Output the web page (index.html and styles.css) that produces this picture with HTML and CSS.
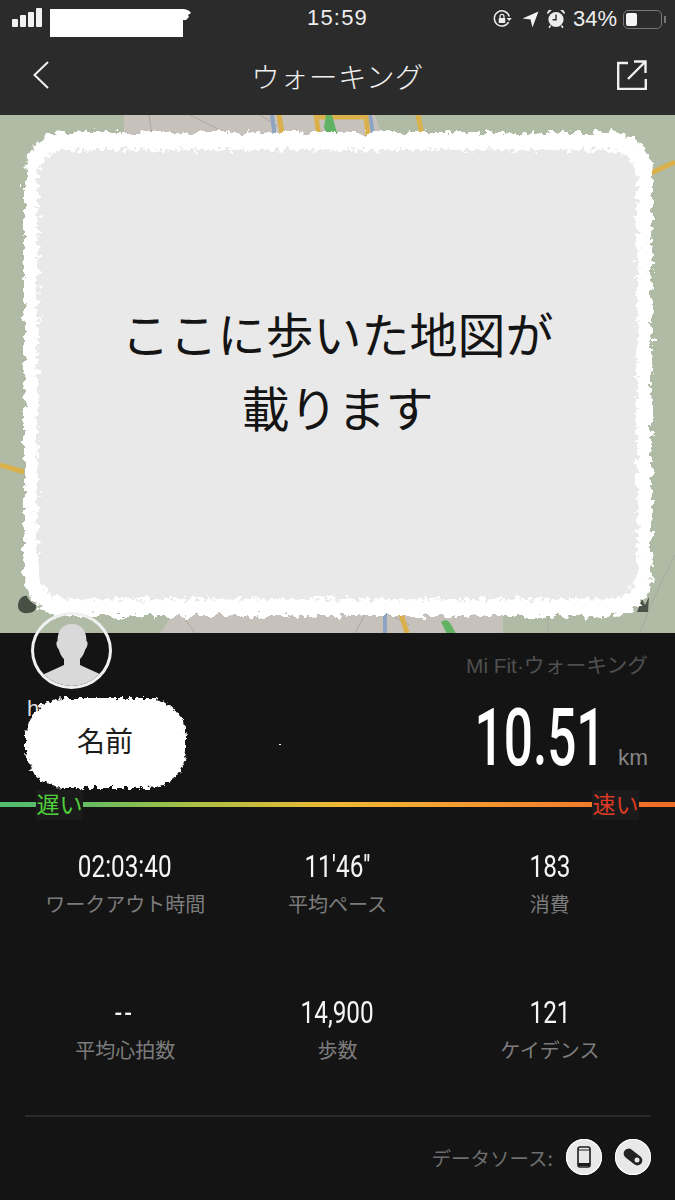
FILE: index.html
```html
<!DOCTYPE html>
<html>
<head>
	<title>ウォーキング</title>
	<meta charset="utf-8">
	<link rel="stylesheet" href="styles.css">
</head>
<body>

<svg class="defs" width="0" height="0">
	<filter id="rough" x="-5%" y="-5%" width="110%" height="110%" color-interpolation-filters="sRGB">
		<feTurbulence type="fractalNoise" baseFrequency=".13" numOctaves="3" seed="4"/>
		<feDisplacementMap in="SourceGraphic" scale="13" xChannelSelector="R" yChannelSelector="G"/>
		<feGaussianBlur stdDeviation=".5"/>
	</filter>
	<filter id="roughinner" x="-5%" y="-5%" width="110%" height="110%" color-interpolation-filters="sRGB">
		<feTurbulence type="fractalNoise" baseFrequency=".2" numOctaves="4" seed="11"/>
		<feDisplacementMap in="SourceGraphic" scale="14" xChannelSelector="R" yChannelSelector="G"/>
		<feGaussianBlur stdDeviation=".7"/>
	</filter>
	<filter id="roughsmall" x="-5%" y="-5%" width="110%" height="110%" color-interpolation-filters="sRGB">
		<feTurbulence type="fractalNoise" baseFrequency=".2" numOctaves="3" seed="9"/>
		<feDisplacementMap in="SourceGraphic" scale="9" xChannelSelector="R" yChannelSelector="G"/>
		<feGaussianBlur stdDeviation=".3"/>
	</filter>
</svg>

<div class="top">
	<div class="status">
		<div class="status-left">
			<div class="signal"><i class="s1"></i><i class="s2"></i><i class="s3"></i><i class="s4"></i></div>
			<div class="redact"></div>
			<svg class="wifi-bit" width="8" height="12" viewBox="0 0 8 12"><path d="M0 0C3 0 6 1 8 4L5 6 6 8 3 11H0z" fill="#fff"/></svg>
		</div>
		<div class="clock">15:59</div>
		<div class="status-right">
			<svg width="19" height="18" viewBox="0 0 19 18">
				<path d="M15.6 12.2A7.6 7.6 0 1 1 16.3 6.5" fill="none" stroke="#eee" stroke-width="1.5"/>
				<path d="M13.6 8h5.2l-2.6 3z" fill="#eee"/>
				<rect x="5.7" y="8" width="6.6" height="5" rx=".8" fill="#eee"/>
				<path d="M7 8V6.4a2 2 0 0 1 4 0V8" fill="none" stroke="#eee" stroke-width="1.2"/>
			</svg>
			<svg class="arrow" width="17" height="17" viewBox="0 0 17 17"><path d="M0.5 7.6 16.5 0.5 10.4 16.5 8.6 8.6z" fill="#f2f2f2"/></svg>
			<svg class="alarm" width="18" height="20" viewBox="0 0 18 20">
				<circle cx="9" cy="10.5" r="7.6" fill="#eee"/>
				<path d="M9 5.5v5.3H5.6" fill="none" stroke="#2b2b2b" stroke-width="1.4"/>
				<path d="M.6 5.2 4.6 1.2A3 3 0 0 0 .6 5.2zM17.4 5.2 13.4 1.2A3 3 0 0 1 17.4 5.2z" fill="#eee"/>
				<path d="M3.6 16.5 2 18.8M14.4 16.5 16 18.8" stroke="#eee" stroke-width="1.5"/>
			</svg>
			<span class="pct">34%</span>
			<div class="battery"><div class="battery-fill"></div></div>
			<div class="battery-nub"></div>
		</div>
	</div>
	<div class="nav">
		<svg width="16" height="28" viewBox="0 0 16 28"><path d="M15 1 1.5 14 15 27" fill="none" stroke="#f0f0f0" stroke-width="2"/></svg>
		<div class="title">ウォーキング</div>
		<svg class="share" width="30" height="30" viewBox="0 0 30 30">
			<path d="M11 3H1.2V29H28.8V19" fill="none" stroke="#f0f0f0" stroke-width="2.4"/>
			<path d="M11 19 28 2M17 1.5H28.5V13" fill="none" stroke="#f0f0f0" stroke-width="2.4"/>
		</svg>
	</div>
</div>

<div class="map">
	<svg class="map-art" width="675" height="518" viewBox="0 0 675 518">
		<rect width="675" height="518" fill="#b0bba6"/>
		<path d="M124 0H375L395 60 520 300 503 470V518H160L200 460 124 300z" fill="#c6c2bb"/>
		<g fill="none" stroke="#a3ae9a" stroke-width="1">
			<path d="M640 518C650 490 660 470 675 440"/>
			<path d="M548 500V518"/>
		</g>
		<g fill="none" stroke="#a9a6a0" stroke-width="1">
			<path d="M149 0 152 20M190 0 230 20M260 0 300 25"/>
			<path d="M355 518 370 490 410 510M175 490 195 518"/>
		</g>
		<g fill="none" stroke="#8ea4c4" stroke-width="4">
			<path d="M272 0 276 30M370 0 374 25M385 485V518"/>
		</g>
		<g fill="none" stroke="#d9b04c" stroke-width="5">
			<path d="M279 0 284 30M316 0 320 30M316 2H366L369 30M418 0 424 30"/>
			<path d="M398 490 407 518"/>
			<path d="M640 63 675 47M0 350 24 357"/>
		</g>
		<path d="M326 0h6l5 18-4 6h-4l-5-12z" fill="#62b263"/>
		<path d="M441 507c4-3 7-2 9 1l11 19h-10z" fill="#62b263"/>
		<path d="M18 491c0-7 5-11 9-10 1 4 5 7 9 9 1 5-3 8-8 8-5 1-10-2-10-7z" fill="#485045"/>
		<path d="M637 497 642 484 645 490 649 482 648 497z" fill="#4b5247"/>
		<rect x="24" y="17" width="628" height="484" rx="40" fill="#fff" filter="url(#rough)"/>
		<rect x="38" y="35" width="599" height="449" rx="28" fill="#e9e9e9" filter="url(#roughinner)"/>
	</svg>
	<div class="map-note">ここに歩いた地図が<br>載ります</div>
</div>

<div class="summary">
	<div class="avatar">
		<svg width="74" height="74" viewBox="0 0 74 74">
			<path d="M37 9c10 0 14.500 7 14.500 17 2 1 1 6-1 8-2 6-3.500 8-5.500 10v6l22 10c-7 8-17 13-30 13S13 68 7 60l22-10v-6c-2-2-3.500-4-5.500-10-2-2-3-7-1-8C22.500 16 27 9 37 9z" fill="#d9d9d9"/>
		</svg>
	</div>
	<div class="who">
		<span class="name-behind">h</span>
		<svg class="name-art" width="185" height="112" viewBox="0 0 185 112">
			<rect x="12" y="10" width="160" height="90" rx="38" fill="#fff" filter="url(#roughsmall)"/>
		</svg>
		<span class="name">名前</span>
	</div>
	<span class="dot"></span>
	<div class="result">
		<div class="source">Mi Fit·ウォーキング</div>
		<div class="distance">
			<span class="distance-num">10.51</span>
			<span class="unit">km</span>
		</div>
	</div>
</div>

<div class="speed">
	<span class="slow">遅い</span>
	<span class="fast">速い</span>
</div>

<div class="stats">
	<div class="stat"><div class="val"><span>02:03:40</span></div><div class="lab">ワークアウト時間</div></div>
	<div class="stat"><div class="val"><span>11'46''</span></div><div class="lab">平均ペース</div></div>
	<div class="stat"><div class="val"><span>183</span></div><div class="lab">消費</div></div>
	<div class="stat"><div class="val"><span class="nodata">--</span></div><div class="lab">平均心拍数</div></div>
	<div class="stat"><div class="val"><span>14,900</span></div><div class="lab">歩数</div></div>
	<div class="stat"><div class="val"><span>121</span></div><div class="lab">ケイデンス</div></div>
</div>

<div class="foot">
	<span class="foot-label">データソース:</span>
	<div class="chip">
		<svg width="14" height="22" viewBox="0 0 14 22">
			<rect x="1" y="1" width="12" height="20" rx="2" fill="#e8e8e8" stroke="#1c1c1c" stroke-width="1.6"/>
			<rect x="1" y="3.500" width="12" height="1" fill="#1c1c1c"/>
			<rect x="1" y="17" width="12" height="3" fill="#1c1c1c"/>
		</svg>
	</div>
	<div class="chip">
		<svg width="24" height="24" viewBox="0 0 24 24">
			<rect x="1.500" y="7" width="21" height="10" rx="5" fill="#222" transform="rotate(38 12 12)"/>
			<circle cx="16" cy="15" r="2.500" fill="#e8e8e8"/>
		</svg>
	</div>
</div>

</body>
</html>
```

FILE: styles.css
```css
* {
	box-sizing: border-box;
}

body {
	margin: 0;
	width: 675px;
	height: 1200px;
	overflow: hidden;
	background-color: #141414;
	font-family: "Liberation Sans", "Noto Sans CJK JP", sans-serif;
}

.defs {
	display: block;
	height: 0;
}

.top {
	height: 115px;
	background-color: #2b2b2b;
}

.status {
	height: 38px;
	display: grid;
	grid-template-columns: 1fr auto 1fr;
	align-items: center;
	color: #eee;
}

.status-left {
	display: flex;
	align-items: flex-start;
	gap: 8px;
	padding-left: 12px;
	height: 38px;
	padding-top: 8px;
}

.signal {
	display: flex;
	align-items: flex-end;
	gap: 2px;
	height: 19px;
}

.signal i {
	display: block;
	width: 6px;
	background-color: #f2f2f2;
	border-radius: 1px;
}

.s1 { height: 8px; }
.s2 { height: 12px; }
.s3 { height: 15px; }
.s4 { height: 19px; }

.redact {
	width: 133px;
	height: 28px;
	margin-top: 1px;
	background-color: #fff;
}

.wifi-bit {
	margin-left: -8px;
	margin-top: 1px;
}

.clock {
	font-size: 22px;
	letter-spacing: 1.200px;
	margin-top: -2px;
}

.status-right {
	display: flex;
	align-items: center;
	justify-content: flex-end;
	padding-right: 9px;
}

.arrow {
	margin-left: 10px;
}

.alarm {
	margin-left: 8px;
}

.pct {
	font-size: 22px;
	margin-left: 8px;
}

.battery {
	width: 39px;
	height: 19px;
	margin-left: 6px;
	padding: 2px;
	border: 1.500px solid #777;
	border-radius: 5px;
}

.battery-fill {
	width: 11px;
	height: 100%;
	background-color: #f5f5f5;
	border-radius: 2px;
}

.battery-nub {
	width: 2px;
	height: 7px;
	margin-left: 2px;
	background-color: #777;
}

.nav {
	height: 77px;
	padding: 0 33px 3px;
	display: grid;
	grid-template-columns: 1fr auto 1fr;
	align-items: center;
}

.share {
	justify-self: end;
	margin-right: -5px;
}

.title {
	font-size: 28.500px;
	font-weight: 300;
	color: #f0f0f0;
	letter-spacing: .4px;
}

.map {
	position: relative;
	height: 518px;
	overflow: hidden;
	display: flex;
	align-items: center;
	justify-content: center;
}

.map-art {
	position: absolute;
	left: 0;
	top: 0;
}

.map-note {
	position: relative;
	margin-top: 0;
	font-size: 48px;
	line-height: 74px;
	text-align: center;
	color: #141414;
}

.summary {
	position: relative;
	height: 167px;
	padding-left: 14px;
	padding-right: 27px;
	display: flex;
	justify-content: space-between;
}

.avatar {
	position: absolute;
	left: 31px;
	top: -21px;
	width: 81px;
	height: 77px;
	padding: 0 0 0 1px;
	border: 3px solid #f0f0f0;
	border-radius: 50%;
	overflow: hidden;
	display: flex;
	justify-content: center;
}

.who {
	position: relative;
	width: 185px;
	height: 112px;
	margin-top: 55px;
	display: flex;
	align-items: center;
	justify-content: center;
	font-size: 28px;
	color: #1c1c1c;
}

.name-behind {
	position: absolute;
	left: 13px;
	top: 8px;
	font-size: 22px;
	color: #ddd;
}

.name-art {
	position: absolute;
	left: 0;
	top: 0;
}

.name {
	position: relative;
	margin-top: -8px;
	margin-left: -3px;
}

.dot {
	position: absolute;
	left: 279px;
	top: 111px;
	width: 2px;
	height: 1px;
	background-color: #fff;
}

.result {
	display: flex;
	flex-direction: column;
	align-items: flex-end;
	padding-top: 20px;
}

.source {
	font-size: 20.800px;
	line-height: 26px;
	color: #505050;
}

.distance {
	display: flex;
	align-items: baseline;
	margin-top: 13px;
	line-height: 92px;
}

.distance-num {
	display: inline-block;
	font-family: Roboto, sans-serif;
	font-size: 79px;
	font-weight: 500;
	color: #fff;
	transform: scaleX(.65);
	transform-origin: right center;
}

.unit {
	margin-left: 12px;
	font-size: 22.500px;
	color: #858585;
}

.speed {
	height: 30px;
	margin-top: -10px;
	padding: 0 36px;
	display: flex;
	justify-content: space-between;
	font-family: "Noto Sans CJK JP", sans-serif;
	font-size: 23px;
	line-height: 27px;
	background-image: linear-gradient(90deg, #50bd70 0%, #63bb62 12%, #a9c045 28%, #f0b934 50%, #f4a032 66%, #f27f2b 85%, #ee6a28 100%);
	background-size: 100% 5px;
	background-position: 0 12px;
	background-repeat: no-repeat;
}

.slow, .fast {
	width: 47px;
	text-align: center;
	background-color: #1b1b1b;
}

.slow {
	color: #4fd03b;
}

.fast {
	color: #dc3a26;
}

.stats {
	height: 295px;
	padding: 28px 19px 0;
	display: grid;
	grid-template-columns: repeat(3, 1fr);
	grid-template-rows: 146px 146px;
	align-content: start;
}

.stat {
	text-align: center;
}

.val {
	height: 36px;
	line-height: 36px;
	font-family: Roboto, sans-serif;
	font-size: 32px;
	color: #f5f5f5;
}

.val span {
	display: inline-block;
	transform: scaleX(.76);
}

.val .nodata {
	letter-spacing: 4px;
}

.lab {
	margin-top: 5px;
	font-family: "Noto Sans CJK JP", sans-serif;
	font-size: 20px;
	line-height: 30px;
	color: #7c7c7c;
}

.foot {
	margin: 0 24px 0 25px;
	height: 85px;
	padding-top: 22px;
	border-top: 2px solid #2a2a2a;
	display: flex;
	align-items: flex-start;
	justify-content: flex-end;
}

.foot-label {
	margin-right: 13px;
	font-family: "Noto Sans CJK JP", sans-serif;
	font-size: 19.500px;
	line-height: 38px;
	color: #6e6e6e;
}

.chip {
	width: 36px;
	height: 36px;
	margin-left: 13px;
	border-radius: 50%;
	background-color: #e8e8e8;
	box-shadow: 0 0 0 1px #fff inset;
	display: flex;
	align-items: center;
	justify-content: center;
}

.foot-label + .chip {
	margin-left: 0;
}
```
